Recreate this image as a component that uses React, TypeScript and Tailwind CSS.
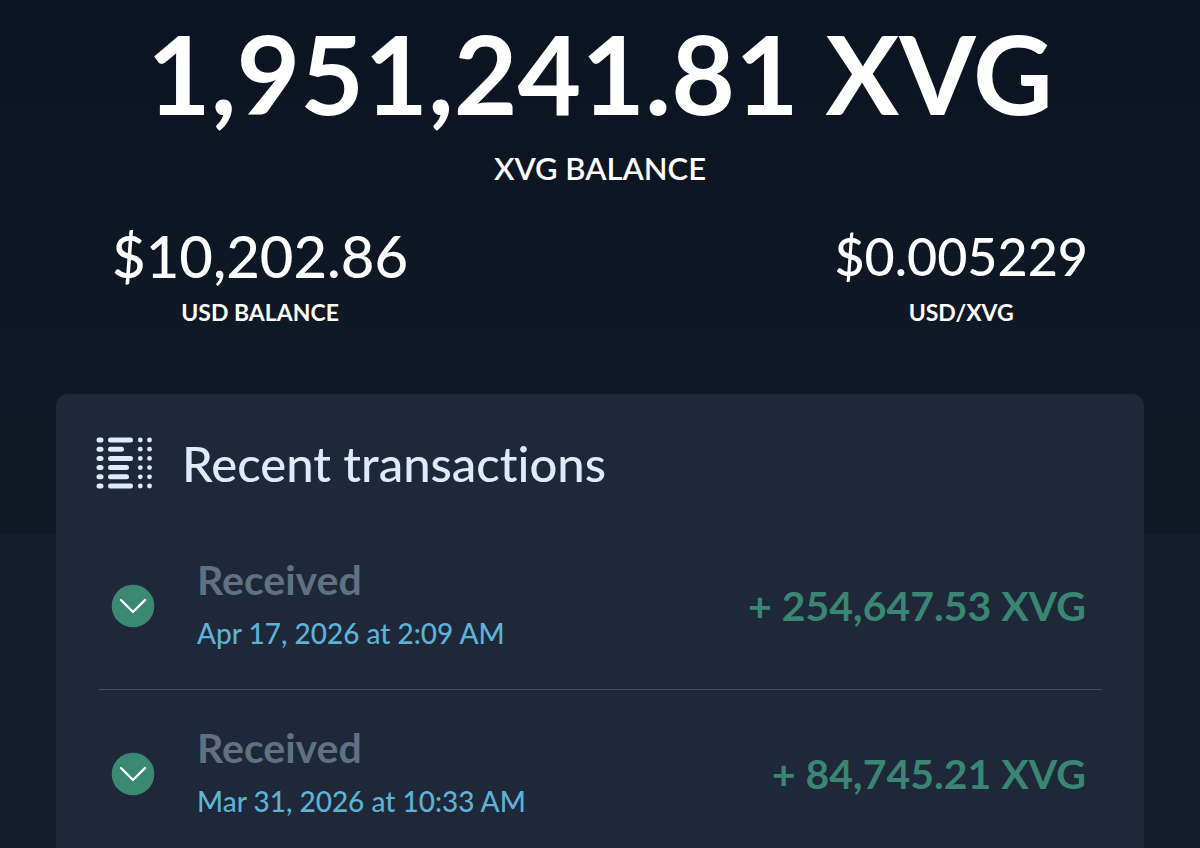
type Transaction = {
  id: number;
  kind: string;
  date: string;
  amount: string;
};

const transactions: Transaction[] = [
  { id: 1, kind: "Received", date: "Apr 17, 2026 at 2:09 AM", amount: "+ 254,647.53 XVG" },
  { id: 2, kind: "Received", date: "Mar 31, 2026 at 10:33 AM", amount: "+ 84,745.21 XVG" },
];

const barWidths = [25, 16, 25, 21, 21, 25];

function LedgerIcon() {
  return (
    <svg viewBox="0 0 56 52" className="h-[52px] w-14 shrink-0 fill-[#dfebfd]" aria-hidden="true">
      {barWidths.map((width, i) => {
        const y = 0.5 + i * 9.2;
        return (
          <g key={i}>
            <rect x="0.5" y={y} width="7" height="5" rx="2.5" />
            <rect x="12" y={y} width={width} height="5" rx="2.5" />
            <circle cx="44.3" cy={y + 2.5} r="2.4" />
            <circle cx="53.5" cy={y + 2.5} r="2.4" />
          </g>
        );
      })}
    </svg>
  );
}

function ReceivedIcon() {
  return (
    <svg viewBox="0 0 44 44" className="size-11 shrink-0" aria-hidden="true">
      <circle cx="22" cy="22" r="21.3" fill="#3b8873" />
      <path
        d="M10 16 22 28 34 16"
        fill="none"
        stroke="#fff"
        strokeWidth="2.4"
        strokeLinecap="round"
        strokeLinejoin="round"
      />
    </svg>
  );
}

function TransactionRow({ kind, date, amount }: Transaction) {
  return (
    <li className="flex h-[168px] items-center border-b border-[#434e5e] pr-4 pl-3 last:border-b-0">
      <ReceivedIcon />
      <div className="ml-[42px] flex flex-1 flex-col">
        <span className="text-[41px] leading-[54px] font-bold text-[#607181]">{kind}</span>
        <span className="text-[28px] leading-[52px] font-medium text-[#5db2d6]">{date}</span>
      </div>
      <span className="text-[41px] leading-[54px] font-bold whitespace-nowrap text-[#3a8672]">{amount}</span>
    </li>
  );
}

export default function App() {
  return (
    <main className="flex min-h-screen flex-col border-b border-[#20262b] bg-[#151e2c] bg-[linear-gradient(#0d1421_0px,#0e1623_220px,#101a26_400px,#101a25_533px,#151e2c_534px)] font-[Lato,sans-serif] text-white">
      <header className="flex flex-col items-center pt-4">
        <h1 className="text-[110px] leading-[112px] font-bold whitespace-nowrap">1,951,241.81 XVG</h1>
        <p className="mt-5 text-[31px] leading-10 font-semibold">XVG BALANCE</p>
      </header>

      <section className="mt-9 flex justify-between px-[112px]">
        <div className="flex flex-col items-center">
          <span className="text-[58px] leading-16 font-medium">$10,202.86</span>
          <span className="mt-2 text-[23px] leading-8 font-bold">USD BALANCE</span>
        </div>
        <div className="flex flex-col items-center">
          <span className="text-[52px] leading-16 font-medium">$0.005229</span>
          <span className="mt-2 text-[23px] leading-8 font-bold">USD/XVG</span>
        </div>
      </section>

      <section className="mx-14 mt-[66px] flex-1 rounded-t-xl bg-[#1e2839] pr-[42px] pl-10">
        <div className="flex h-32 items-center gap-[30px] pt-[9px]">
          <LedgerIcon />
          <h2 className="text-[49px] leading-[60px] font-medium text-[#dfebfd] [font-variant-ligatures:none]">
            Recent transactions
          </h2>
        </div>
        <ul className="ml-[3px]">
          {transactions.map((transaction) => (
            <TransactionRow key={transaction.id} {...transaction} />
          ))}
        </ul>
      </section>
    </main>
  );
}
